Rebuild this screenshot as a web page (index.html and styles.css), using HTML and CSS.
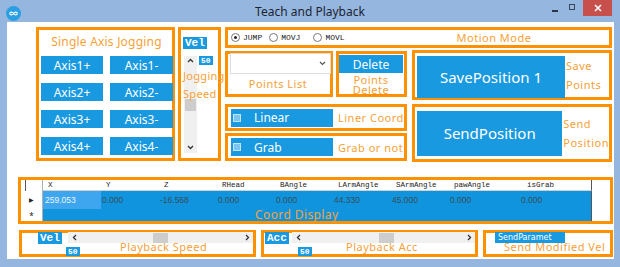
FILE: index.html
```html
<!DOCTYPE html>
<html lang="en">
<head>
  <meta charset="UTF-8">
  <title>Teach and Playback</title>
  <link rel="stylesheet" href="styles.css">
</head>
<body>
  <div class="window">
    <!-- barra de titulo -->
    <div class="titlebar">
      <span class="app-icon">
        <svg width="15" height="15" viewBox="0 0 15 15">
          <circle cx="7.5" cy="7.5" r="7.5" fill="#2a9fe4"/>
          <path d="M7.5 7.5 C6.3 5.6 3.8 5.6 3.8 7.5 C3.8 9.4 6.3 9.4 7.5 7.5 C8.7 5.6 11.2 5.6 11.2 7.5 C11.2 9.4 8.7 9.4 7.5 7.5 Z" fill="none" stroke="#fff" stroke-width="1.1"/>
        </svg>
      </span>
      <span class="title">Teach and Playback</span>
      <div class="caption-btns">
        <span class="cap-min"></span>
        <span class="cap-max"></span>
        <span class="cap-close">
          <svg width="8" height="8" viewBox="0 0 8 8"><path d="M1 1 L7 7 M7 1 L1 7" stroke="#fff" stroke-width="1.6"/></svg>
        </span>
      </div>
    </div>

    <div class="client">
      <div class="top">
        <!-- jogging por eixo -->
        <div class="box jog">
          <div class="jog-title">Single Axis Jogging</div>
          <div class="axis-grid">
            <span class="blue-btn">Axis1+</span>
            <span class="blue-btn">Axis1-</span>
            <span class="blue-btn">Axis2+</span>
            <span class="blue-btn">Axis2-</span>
            <span class="blue-btn">Axis3+</span>
            <span class="blue-btn">Axis3-</span>
            <span class="blue-btn">Axis4+</span>
            <span class="blue-btn">Axis4-</span>
          </div>
        </div>

        <!-- velocidade do jog -->
        <div class="box vel-col">
          <span class="tag">Vel</span>
          <div class="vscroll">
            <svg class="arrow-up" width="7" height="5" viewBox="0 0 7 5"><path d="M1 4 L3.5 1.5 L6 4" fill="none" stroke="#333" stroke-width="1.3"/></svg>
            <span class="vthumb"></span>
            <svg class="arrow-down" width="7" height="5" viewBox="0 0 7 5"><path d="M1 1 L3.5 3.5 L6 1" fill="none" stroke="#333" stroke-width="1.3"/></svg>
          </div>
          <span class="mini-tag vel-val">50</span>
          <span class="vel-label">Jogging<br>Speed</span>
        </div>

        <div class="right">
          <div class="box motion">
            <span class="radio checked"></span><span class="radio-text">JUMP</span>
            <span class="radio r2"></span><span class="radio-text">MOVJ</span>
            <span class="radio r3"></span><span class="radio-text">MOVL</span>
            <span class="label motion-label">Motion Mode</span>
          </div>

          <div class="right-body">
            <div class="col-left">
              <div class="points-row">
                <div class="box points">
                  <div class="combo">
                    <svg width="7" height="5" viewBox="0 0 7 5"><path d="M1 1 L3.5 3.5 L6 1" fill="none" stroke="#555" stroke-width="1.2"/></svg>
                  </div>
                  <div class="label points-label">Points List</div>
                </div>
                <div class="box del">
                  <span class="blue-btn del-btn">Delete</span>
                  <div class="label del-label">Points<br>Delete</div>
                </div>
              </div>

              <div class="box check-row linear">
                <div class="check-bar"><span class="check"></span>Linear</div>
                <span class="label">Liner Coord</span>
              </div>
              <div class="box check-row grab">
                <div class="check-bar"><span class="check"></span>Grab</div>
                <span class="label">Grab or not</span>
              </div>
            </div>

            <div class="col-right">
              <div class="box big save">
                <span class="blue-btn big-btn">SavePosition 1</span>
                <span class="label side-label">Save<br>Points</span>
              </div>
              <div class="box big send">
                <span class="blue-btn big-btn">SendPosition</span>
                <span class="label side-label">Send<br>Position</span>
              </div>
            </div>
          </div>
        </div>
      </div>

      <!-- tabela de coordenadas -->
      <div class="box coord">
        <div class="grid">
          <span class="rh head"></span>
          <span class="hc">X</span>
          <span class="hc">Y</span>
          <span class="hc">Z</span>
          <span class="hc">RHead</span>
          <span class="hc">BAngle</span>
          <span class="hc">LArmAngle</span>
          <span class="hc">SArmAngle</span>
          <span class="hc">pawAngle</span>
          <span class="hc last">isGrab</span>
          <span class="empty"></span>

          <span class="rh">&#9654;</span>
          <span class="dc sel">259.053</span>
          <span class="dc">0.000</span>
          <span class="dc">-16.568</span>
          <span class="dc">0.000</span>
          <span class="dc">0.000</span>
          <span class="dc">44.330</span>
          <span class="dc">45.000</span>
          <span class="dc">0.000</span>
          <span class="dc last">0.000</span>
          <span class="empty"></span>

          <span class="rh star">*</span>
          <span class="new-row"></span>
          <span class="empty"></span>
        </div>
        <span class="label coord-label">Coord Display</span>
      </div>

      <div class="bottom">
        <div class="box slider speed">
          <span class="tag">Vel</span>
          <div class="hscroll">
            <svg width="5" height="7" viewBox="0 0 5 7"><path d="M4 1 L1.5 3.5 L4 6" fill="none" stroke="#333" stroke-width="1.3"/></svg>
            <span class="hthumb"></span>
            <svg width="5" height="7" viewBox="0 0 5 7"><path d="M1 1 L3.5 3.5 L1 6" fill="none" stroke="#333" stroke-width="1.3"/></svg>
          </div>
          <span class="mini-tag slider-val">50</span>
          <span class="label slider-label">Playback Speed</span>
        </div>
        <div class="box slider acc">
          <span class="tag">Acc</span>
          <div class="hscroll">
            <svg width="5" height="7" viewBox="0 0 5 7"><path d="M4 1 L1.5 3.5 L4 6" fill="none" stroke="#333" stroke-width="1.3"/></svg>
            <span class="hthumb"></span>
            <svg width="5" height="7" viewBox="0 0 5 7"><path d="M1 1 L3.5 3.5 L1 6" fill="none" stroke="#333" stroke-width="1.3"/></svg>
          </div>
          <span class="mini-tag slider-val">50</span>
          <span class="label slider-label">Playback Acc</span>
        </div>
        <div class="box send-vel">
          <span class="param-btn">SendParamet</span>
          <span class="label send-vel-label">Send Modified Vel</span>
        </div>
      </div>
    </div>
  </div>
</body>
</html>
```

FILE: styles.css
```css
* {
  box-sizing: border-box;
}

body {
  margin: 0;
  font-family: "Noto Sans", sans-serif;
}

.window {
  width: 620px;
  height: 267px;
  background-color: #95b6df;
  padding: 0 6px 8px 7px;
  display: flex;
  flex-direction: column;
}

.titlebar {
  height: 22px;
  margin: 0 -6px 0 -7px;
  display: grid;
  grid-template-columns: 1fr auto 1fr;
  align-items: center;
}

.app-icon {
  margin-left: 6px;
  height: 15px;
}

.title {
  font-size: 12px;
  color: #1c2430;
}

.caption-btns {
  justify-self: end;
  align-self: start;
  display: flex;
  align-items: flex-start;
  margin-right: 8px;
}

.cap-min {
  width: 6px;
  height: 2px;
  background-color: #2b3648;
  margin-top: 10px;
}

.cap-max {
  width: 6px;
  height: 6px;
  border: 1px solid #3a465a;
  margin: 4px 0 0 11px;
}

.cap-close {
  width: 29px;
  height: 16px;
  margin-left: 8px;
  background-color: #c8504c;
  display: flex;
  align-items: center;
  justify-content: center;
}

.client {
  flex: 1;
  background-color: #fff;
  padding-top: 5px;
}

.box {
  border: 3px solid #ff9100;
  position: relative;
}

.label {
  color: #f7a136;
  font-size: 11px;
  letter-spacing: 0.5px;
  white-space: nowrap;
}

.blue-btn {
  background-color: #1999df;
  color: #fff;
  font-size: 12px;
  display: flex;
  align-items: center;
  justify-content: center;
}

.tag {
  background-color: #1999df;
  color: #fff;
  font-family: "Liberation Mono", monospace;
  font-weight: bold;
  font-size: 11px;
  line-height: 12px;
  height: 12px;
  padding: 0 2px;
}

.mini-tag {
  background-color: #1999df;
  color: #fff;
  font-family: "Liberation Mono", monospace;
  font-weight: bold;
  font-size: 8px;
  line-height: 9px;
  padding: 0 2px;
}

/* linha de cima */
.top {
  display: flex;
  margin-left: 29px;
  height: 134px;
}

.jog {
  width: 139px;
  padding-left: 2px;
}

.jog-title {
  height: 26px;
  line-height: 24px;
  text-align: center;
  color: #f7a136;
  font-size: 12px;
  letter-spacing: 0.2px;
}

.axis-grid {
  display: grid;
  grid-template-columns: 62px 63px;
  grid-auto-rows: 18px;
  column-gap: 7px;
  row-gap: 9px;
}

.vel-col {
  width: 43px;
  margin-left: 3px;
  padding: 7px 0 0 2px;
  display: flex;
  flex-direction: column;
  align-items: flex-start;
}

.vscroll {
  width: 13px;
  height: 97px;
  margin: 7px 0 0 1px;
  background-color: #f0f0f0;
  display: flex;
  flex-direction: column;
  align-items: center;
}

.arrow-up {
  margin-top: 2px;
}

.vthumb {
  width: 11px;
  height: 12px;
  background-color: #cdcdcd;
  margin-top: 36px;
}

.arrow-down {
  margin-top: auto;
  margin-bottom: 3px;
}

.vel-val {
  position: absolute;
  left: 18px;
  top: 26px;
}

.vel-label {
  position: absolute;
  left: 2px;
  top: 37px;
  color: #f7a136;
  font-size: 11px;
  line-height: 18px;
  letter-spacing: 0.3px;
}

.right {
  width: 387px;
  margin-left: 4px;
  display: flex;
  flex-direction: column;
}

.motion {
  height: 21px;
  display: flex;
  align-items: center;
  padding-left: 3px;
}

.radio {
  width: 9px;
  height: 9px;
  border: 1px solid #7a7a7a;
  border-radius: 50%;
  position: relative;
}

.radio.checked::after {
  content: "";
  position: absolute;
  left: 2px;
  top: 2px;
  width: 3px;
  height: 3px;
  border-radius: 50%;
  background-color: #222;
}

.radio-text {
  font-family: "Liberation Mono", monospace;
  font-size: 8px;
  color: #222;
  margin-left: 3px;
}

.r2 {
  margin-left: 7px;
}

.r3 {
  margin-left: 13px;
}

.motion-label {
  margin-left: 112px;
}

.right-body {
  display: flex;
  margin-top: 2px;
}

.col-left {
  width: 182px;
  display: flex;
  flex-direction: column;
}

.points-row {
  display: flex;
  gap: 3px;
  height: 46px;
  margin-top: 1px;
}

.points {
  width: 108px;
  padding: 0 0 0 2px;
}

.combo {
  width: 101px;
  height: 21px;
  margin-top: -1px;
  border: 1px solid #dcdcdc;
  display: flex;
  align-items: center;
  justify-content: flex-end;
  padding-right: 4px;
}

.points-label {
  text-align: center;
  line-height: 20px;
  padding-right: 4px;
}

.del {
  width: 71px;
  padding: 1px 1px 0 0;
}

.del-btn {
  height: 18px;
  width: 64px;
}

.del-label {
  text-align: center;
  line-height: 10px;
  margin-top: 2px;
  font-size: 11px;
}

.check-row {
  display: flex;
  align-items: center;
  padding-left: 3px;
}

.linear {
  height: 27px;
  margin-top: 7px;
}

.grab {
  height: 28px;
  margin-top: 2px;
}

.check-bar {
  width: 102px;
  height: 18px;
  background-color: #1999df;
  color: #fff;
  font-size: 12px;
  display: flex;
  align-items: center;
  padding-left: 2px;
  margin-right: 5px;
}

.check {
  width: 8px;
  height: 8px;
  border: 1px solid #bfe3f7;
  background-color: #7cc6ee;
  margin-right: 13px;
}

.col-right {
  width: 200px;
  margin-left: 5px;
  display: flex;
  flex-direction: column;
  gap: 4px;
}

.big {
  display: flex;
  align-items: center;
  padding-left: 2px;
}

.save {
  height: 50px;
}

.send {
  height: 58px;
}

.big-btn {
  width: 148px;
  font-size: 15px;
}

.save .big-btn {
  height: 42px;
  margin-top: 3px;
}

.send .big-btn {
  height: 45px;
}

.side-label {
  margin-left: 1px;
  line-height: 19px;
}

/* tabela */
.coord {
  margin: 16px 0 0 11px;
  width: 595px;
  height: 47px;
}

.grid {
  display: grid;
  grid-template-columns: 22px repeat(8, 58px) 85px 1fr;
  grid-template-rows: 11px 18px 1fr;
  height: 100%;
}

.rh {
  background-color: #fff;
  border-right: 1px solid #b0b0b0;
  font-size: 6px;
  color: #222;
  display: flex;
  align-items: center;
  justify-content: center;
}

.rh.head {
  border-left: 1px solid #555;
  margin-left: 4px;
}

.rh.star {
  font-size: 8px;
}

.hc {
  font-family: "Liberation Mono", monospace;
  font-size: 7.5px;
  color: #222;
  padding-left: 5px;
  line-height: 11px;
  border-bottom: 1px solid #d0d0d0;
}

.hc.last {
  padding-left: 20px;
  border-right: 1px solid #555;
}

.dc {
  background-color: #0f94dd;
  font-family: "Liberation Sans", sans-serif;
  font-size: 8.5px;
  color: #3c4c58;
  padding: 4px 0 0 1px;
}

.dc.sel {
  background-color: #3ea6ee;
  color: #eaf5fd;
  padding-left: 2px;
}

.dc.last {
  padding-left: 14px;
  border-right: 1px solid #555;
}

.new-row {
  grid-column: span 9;
  background-color: #0f94dd;
  border-right: 1px solid #555;
}

.empty {
  background-color: #fff;
}

.coord-label {
  position: absolute;
  left: 234px;
  top: 26px;
  font-size: 12px;
  letter-spacing: 0.4px;
}

/* linha de baixo */
.bottom {
  display: flex;
  gap: 5px;
  margin: 6px 0 0 12px;
  height: 27px;
}

.slider {
  display: flex;
  align-items: flex-start;
}

.speed {
  width: 237px;
  padding-left: 16px;
}

.acc {
  width: 217px;
  padding-left: 1px;
}

.slider .tag {
  margin-top: -1px;
}

.hscroll {
  width: 185px;
  height: 11px;
  margin: -1px 0 0 6px;
  background-color: #f0f0f0;
  display: flex;
  align-items: center;
  padding: 0 3px 0 4px;
}

.acc .hscroll {
  margin-left: 3px;
}

.hthumb {
  width: 15px;
  height: 10px;
  background-color: #cdcdcd;
  margin: 0 auto 0 76px;
}

.acc .hthumb {
  margin-left: 78px;
}

.slider-val {
  position: absolute;
  top: 14px;
}

.speed .slider-val {
  left: 44px;
}

.acc .slider-val {
  left: 34px;
}

.slider-label {
  position: absolute;
  top: 6px;
}

.speed .slider-label {
  left: 98px;
}

.acc .slider-label {
  left: 82px;
}

.send-vel {
  width: 130px;
}

.param-btn {
  position: absolute;
  left: 9px;
  top: -1px;
  width: 70px;
  height: 11px;
  background-color: #1999df;
  color: #fff;
  font-family: "DejaVu Sans", sans-serif;
  font-size: 8px;
  line-height: 11px;
  padding-left: 3px;
}

.send-vel-label {
  position: absolute;
  left: 18px;
  top: 6px;
}
```
